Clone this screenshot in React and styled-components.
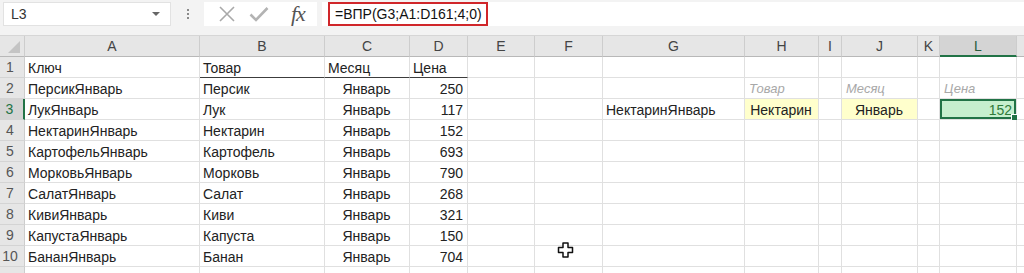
import React from 'react';
import styled, { createGlobalStyle, css } from 'styled-components';

const GlobalStyle = createGlobalStyle`
  html, body {
    margin: 0;
    padding: 0;
    background: #ffffff;
    overflow: hidden;
  }
  * {
    box-sizing: border-box;
  }
`;

const Page = styled.div`
  position: relative;
  width: 1024px;
  height: 273px;
  overflow: hidden;
  font-family: 'Liberation Sans', Arial, sans-serif;
  font-size: 14px;
  color: #222;
  background: #fff;
`;

const FormulaBar = styled.div`
  display: flex;
  align-items: flex-start;
  height: 36px;
  padding-top: 2px;
  background: #f3f3f3;
  border-bottom: 1px solid #d6d6d6;
`;

const NameBox = styled.div`
  display: flex;
  align-items: center;
  justify-content: space-between;
  width: 168px;
  height: 24px;
  margin-left: 3px;
  padding: 0 10px 0 7px;
  background: #fff;
  border: 1px solid #e2e2e2;
  color: #333;
`;

const Arrow = styled.span`
  width: 0;
  height: 0;
  border-left: 4px solid transparent;
  border-right: 4px solid transparent;
  border-top: 4px solid #666;
`;

const Dots = styled.div`
  display: flex;
  flex-direction: column;
  gap: 2px;
  width: 33px;
  height: 24px;
  align-items: center;
  justify-content: center;
  span {
    width: 2px;
    height: 2px;
    background: #8a8a8a;
  }
`;

const FxBox = styled.div`
  display: flex;
  align-items: center;
  width: 113px;
  height: 24px;
  padding-left: 14px;
  gap: 13px;
  background: #fff;
`;

const Fx = styled.span`
  font-family: 'Liberation Serif', 'Times New Roman', serif;
  font-style: italic;
  font-size: 22px;
  color: #555;
  margin-left: 9px;
  letter-spacing: -1px;
`;

const FormulaInput = styled.div`
  flex: 1;
  height: 24px;
  margin-left: 5px;
  padding-left: 6px;
  background: #fff;
`;

const FormulaText = styled.div`
  display: inline-flex;
  align-items: center;
  height: 24px;
  padding: 0 4px 0 5px;
  border: 2px solid #d0262a;
  color: #111;
`;

const Sheet = styled.div`
  display: grid;
  grid-template-columns: 25px 175px 125px 85px 58px 67px 68px 142px 74px 23px 76px 22px 77px 60px;
  grid-auto-rows: 21px;
`;

const ColHead = styled.div`
  display: flex;
  align-items: center;
  justify-content: center;
  background: #e6e6e6;
  color: #444;
  border-right: 1px solid #cdcdcd;
  border-bottom: 1px solid #b8b8b8;
  ${(p) =>
    p.$active &&
    css`
      background: #d4d4d4;
      color: #2a5a3c;
      border-bottom: 2px solid #217346;
    `}
`;

const Corner = styled.div`
  display: flex;
  align-items: flex-end;
  justify-content: flex-end;
  padding: 0 4px 3px 0;
  background: #e6e6e6;
  border-right: 1px solid #cdcdcd;
  border-bottom: 1px solid #b8b8b8;
  span {
    width: 0;
    height: 0;
    border-left: 12px solid transparent;
    border-bottom: 12px solid #c4c4c4;
  }
`;

const RowHead = styled.div`
  display: flex;
  align-items: center;
  justify-content: center;
  padding-right: 4px;
  background: #e6e6e6;
  color: #555;
  border-right: 1px solid #cdcdcd;
  border-bottom: 1px solid #d4d4d4;
  ${(p) =>
    p.$active &&
    css`
      background: #d4d4d4;
      color: #217346;
      border-right: 2px solid #217346;
    `}
`;

const Cell = styled.div`
  position: relative;
  display: flex;
  align-items: center;
  justify-content: ${(p) =>
    p.$align === 'right' ? 'flex-end' : p.$align === 'center' ? 'center' : 'flex-start'};
  padding: 1px 4px 0 3px;
  white-space: nowrap;
  overflow: visible;
  border-right: 1px solid #e0e0e0;
  border-bottom: 1px solid #e0e0e0;
  background: ${(p) => p.$bg || '#fff'};
  ${(p) =>
    p.$label &&
    css`
      font-style: italic;
      font-size: 13px;
      color: #a8a8a8;
      padding-left: 4px;
    `}
  ${(p) =>
    p.$underline &&
    css`
      border-bottom: 1px solid #3c3c3c;
    `}
  ${(p) =>
    p.$selected &&
    css`
      color: #2f7a3a;
      box-shadow: inset 0 0 0 2px #217346;
      &::after {
        content: '';
        position: absolute;
        right: -3px;
        bottom: -3px;
        width: 6px;
        height: 6px;
        background: #217346;
        border: 1px solid #fff;
      }
    `}
`;

const Pointer = styled.svg`
  position: absolute;
  left: 557px;
  top: 242px;
`;

const COLS = ['A', 'B', 'C', 'D', 'E', 'F', 'G', 'H', 'I', 'J', 'K', 'L', 'M'];

const items = [
  ['Персик', 250],
  ['Лук', 117],
  ['Нектарин', 152],
  ['Картофель', 693],
  ['Морковь', 790],
  ['Салат', 268],
  ['Киви', 321],
  ['Капуста', 150],
  ['Банан', 704],
];

function cellFor(row, col) {
  if (row === 1) {
    const head = { A: 'Ключ', B: 'Товар', C: 'Месяц', D: 'Цена' };
    return { text: head[col] || '', underline: ['B', 'C', 'D'].includes(col) };
  }
  if (row >= 2 && row <= 10) {
    const [name, price] = items[row - 2];
    if (col === 'A') return { text: name + 'Январь' };
    if (col === 'B') return { text: name };
    if (col === 'C') return { text: 'Январь', align: 'center' };
    if (col === 'D') return { text: String(price), align: 'right' };
  }
  if (row === 2) {
    if (col === 'H') return { text: 'Товар', label: true };
    if (col === 'J') return { text: 'Месяц', label: true };
    if (col === 'L') return { text: 'Цена', label: true };
  }
  if (row === 3) {
    if (col === 'G') return { text: 'НектаринЯнварь' };
    if (col === 'H') return { text: 'Нектарин', align: 'center', bg: '#ffffcc' };
    if (col === 'J') return { text: 'Январь', align: 'center', bg: '#ffffcc' };
    if (col === 'L') return { text: '152', align: 'right', bg: '#c6efce', selected: true };
  }
  return { text: '' };
}

export default function App() {
  // row 11 is only a sliver at the bottom edge, so its number stays hidden
  const rows = Array.from({ length: 11 }, (_, i) => i + 1);
  return (
    <Page>
      <GlobalStyle />
      <FormulaBar>
        <NameBox>
          <span>L3</span>
          <Arrow />
        </NameBox>
        <Dots>
          <span />
          <span />
          <span />
        </Dots>
        <FxBox>
          <svg width="18" height="18" viewBox="0 0 18 18">
            <path d="M2 2 L16 16 M16 2 L2 16" stroke="#a9a9a9" strokeWidth="1.6" fill="none" />
          </svg>
          <svg width="20" height="16" viewBox="0 0 20 16">
            <path d="M1.5 8.5 L7 14 L18.5 2" stroke="#b3b3b3" strokeWidth="2.6" fill="none" />
          </svg>
          <Fx>fx</Fx>
        </FxBox>
        <FormulaInput>
          <FormulaText>=ВПР(G3;A1:D161;4;0)</FormulaText>
        </FormulaInput>
      </FormulaBar>
      <Sheet>
        <Corner>
          <span />
        </Corner>
        {COLS.map((c) => (
          <ColHead key={c} $active={c === 'L'}>
            {c === 'M' ? '' : c}
          </ColHead>
        ))}
        {rows.map((r) => (
          <React.Fragment key={r}>
            <RowHead $active={r === 3}>{r <= 10 ? r : ''}</RowHead>
            {COLS.map((c) => {
              const cell = cellFor(r, c);
              return (
                <Cell
                  key={c}
                  $align={cell.align}
                  $bg={cell.bg}
                  $label={cell.label}
                  $underline={cell.underline}
                  $selected={cell.selected}
                >
                  {cell.text}
                </Cell>
              );
            })}
          </React.Fragment>
        ))}
      </Sheet>
      <Pointer width="17" height="16" viewBox="0 0 17 16">
        <path
          d="M6 1 H11 V5.5 H15.5 V10.5 H11 V15 H6 V10.5 H1.5 V5.5 H6 Z"
          fill="#fff"
          stroke="#111"
          strokeWidth="1.5"
          strokeLinejoin="round"
        />
      </Pointer>
    </Page>
  );
}
